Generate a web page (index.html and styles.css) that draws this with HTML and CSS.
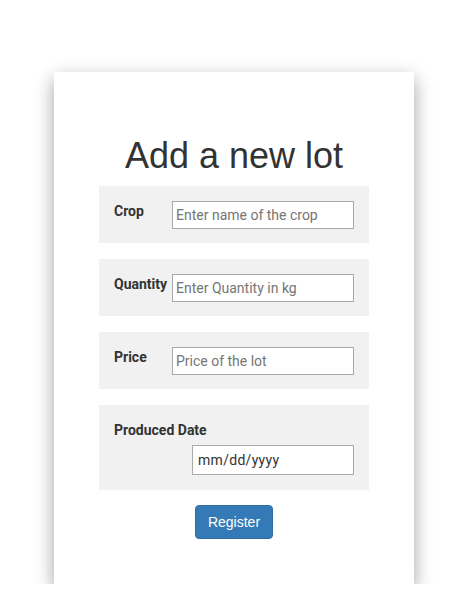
FILE: index.html
```html
<!DOCTYPE html>
<html>
<head>
<meta charset="utf-8">
<link rel="stylesheet" href="styles.css">
</head>
<body>
<div class="card">
  <h1 class="title">Add a new lot</h1>
  <div class="row">
    <label class="lbl">Crop</label>
    <input class="field" type="text" placeholder="Enter name of the crop">
  </div>
  <div class="row">
    <label class="lbl">Quantity</label>
    <input class="field" type="text" placeholder="Enter Quantity in kg">
  </div>
  <div class="row">
    <label class="lbl">Price</label>
    <input class="field" type="text" placeholder="Price of the lot">
  </div>
  <div class="row row-date">
    <label class="lbl lbl-wide">Produced Date</label>
    <input class="field field-date" type="text" placeholder="mm/dd/yyyy">
  </div>
  <div class="actions">
    <button class="btn" type="button">Register</button>
  </div>
</div>
</body>
</html>
```

FILE: styles.css
```css
html, body {
  margin: 0;
  padding: 0;
  background: #fff;
}
body {
  padding: 72px 0 0 54px;
  font-family: Roboto, "Liberation Sans", sans-serif;
  color: #333;
}
.card {
  width: 360px;
  box-sizing: border-box;
  padding: 64px 45px 45px;
  background: #fff;
  box-shadow: 0 8px 16px 0 rgba(0,0,0,0.2), 0 6px 20px 0 rgba(0,0,0,0.19);
}
.title {
  margin: 0 0 10px;
  font-family: "Liberation Sans", Arial, sans-serif;
  font-weight: 400;
  font-size: 36px;
  line-height: 39.6px;
  text-align: center;
  color: #333;
}
.row {
  display: flex;
  align-items: flex-start;
  background: #f1f1f1;
  padding: 15px 15px 14px;
  margin-bottom: 16px;
}
.row-date {
  flex-direction: column;
  align-items: flex-end;
  padding-bottom: 15px;
  margin-bottom: 15px;
}
.lbl {
  width: 58px;
  flex: none;
  font-weight: 700;
  font-size: 14px;
  line-height: 20px;
  color: #333;
  white-space: nowrap;
}
.lbl-wide {
  width: auto;
  align-self: flex-start;
  margin-bottom: 5px;
}
.field {
  width: 182px;
  height: 28px;
  box-sizing: border-box;
  border: 1px solid #a9a9a9;
  padding: 1px 3px;
  font-family: Roboto, "Liberation Sans", sans-serif;
  font-size: 14px;
  color: #333;
  background: #fff;
  outline: none;
}
.field::placeholder {
  color: #757575;
}
.field-date {
  width: 162px;
  height: 30px;
  padding-left: 5px;
  letter-spacing: 0.3px;
}
.field-date::placeholder {
  color: #333;
}
.actions {
  display: flex;
  justify-content: center;
}
.btn {
  font-family: "Liberation Sans", Arial, sans-serif;
  font-size: 14px;
  line-height: 20px;
  padding: 6px 12px;
  color: #fff;
  background: #337ab7;
  border: 1px solid #2e6da4;
  border-radius: 4px;
}
```
